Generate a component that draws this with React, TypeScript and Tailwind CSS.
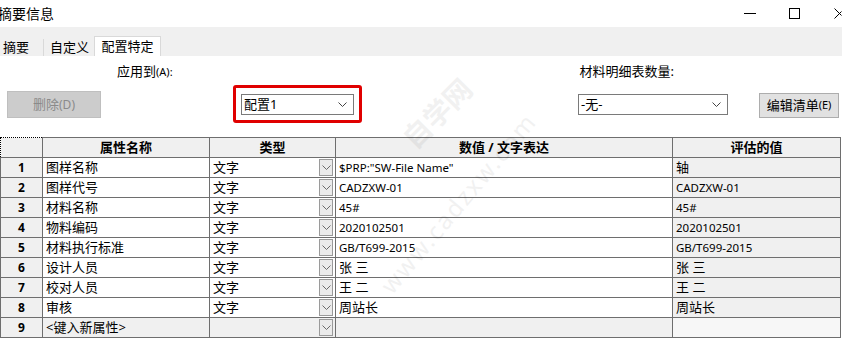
import React from 'react';

const FONT = "font-['Noto_Sans','Noto_Sans_CJK_SC',sans-serif]";

const rows = [
    { name: '图样名称', type: '文字', value: '$PRP:"SW-File Name"', evaluated: '轴' },
    { name: '图样代号', type: '文字', value: 'CADZXW-01', evaluated: 'CADZXW-01' },
    { name: '材料名称', type: '文字', value: '45#', evaluated: '45#' },
    { name: '物料编码', type: '文字', value: '2020102501', evaluated: '2020102501' },
    { name: '材料执行标准', type: '文字', value: 'GB/T699-2015', evaluated: 'GB/T699-2015' },
    { name: '设计人员', type: '文字', value: '张 三', evaluated: '张 三' },
    { name: '校对人员', type: '文字', value: '王 二', evaluated: '王 二' },
    { name: '审核', type: '文字', value: '周站长', evaluated: '周站长' },
];

// 中文用 13px，拉丁字符稍小
const isCjk = (s: string) => /^[\u4e00-\u9fa5]/.test(s);

function Chevron({ className = '' }: { className?: string }) {
    return (
        <svg width="9" height="5" viewBox="0 0 9 5" className={className}>
            <path d="M0.5 0.5 L4.5 4.5 L8.5 0.5" fill="none" stroke="currentColor" strokeWidth="1" />
        </svg>
    );
}

function Combo({ text, width }: { text: string; width: string }) {
    return (
        <div className={`${width} h-[21px] border border-[#7a7a7a] bg-white flex items-center justify-between pl-[2px] pr-[6px]`}>
            <span className="text-[13px] leading-none text-black">{text}</span>
            <Chevron className="text-[#444]" />
        </div>
    );
}

function CellDrop() {
    return (
        <div className="w-[14px] h-[17px] border border-[#9a9a9a] bg-[#ebebeb] flex items-center justify-center text-[#6a6a6a]">
            <Chevron />
        </div>
    );
}

export default function App() {
    return (
        <div className={`relative w-[842px] h-[338px] overflow-hidden bg-white text-black ${FONT}`}>
            {/* 标题栏 */}
            <div className="h-[27px] flex items-center justify-between">
                <span className="-ml-[2px] text-[14px] leading-none">摘要信息</span>
                <div className="flex items-center h-full">
                    <div className="w-[12px] h-px bg-black mr-[33px]" />
                    <div className="w-[11px] h-[11px] border border-black mr-[34px]" />
                    <svg width="8" height="11" viewBox="0 0 8 11">
                        <path d="M0.5 0.5 L7.5 7.5 M0.5 10.5 L7.5 3.5" stroke="black" strokeWidth="1" fill="none" />
                    </svg>
                </div>
            </div>

            {/* 选项卡 */}
            <div className="h-[29px] bg-[#f0f0f0] flex items-end">
                <div className="h-[17px] w-[44px] pl-[3px] flex items-center text-[13px] border-r border-[#d9d9d9]">摘要</div>
                <div className="h-[17px] w-[50px] pl-[6px] flex items-center text-[13px]">自定义</div>
                <div className="h-[20px] w-[67px] bg-white border border-b-0 border-[#d9d9d9] flex items-center justify-center text-[13px]">配置特定</div>
            </div>

            {/* 配置控制 */}
            <div className="h-[81px]">
                <div className="h-[32px] flex items-center text-[13px]">
                    <span className="ml-[117px]">应用到<span className="text-[11px]">(A):</span></span>
                    <span className="ml-[407px]">材料明细表数量:</span>
                </div>
                <div className="flex items-start">
                    <div className="ml-[7px] mt-[3px] w-[94px] h-[27px] bg-[#cccccc] border border-[#bfbfbf] flex items-center justify-center text-[13px] text-[#8a8a8a]">
                        删除<span className="text-[12px]">(D)</span>
                    </div>
                    <div className="ml-[132px] -mt-[3px] w-[129px] h-[38px] border-[3px] border-[#e00000] rounded-[3px] flex items-center justify-center">
                        <Combo text="配置1" width="w-[113px]" />
                    </div>
                    <div className="ml-[216px] mt-[6px]">
                        <Combo text="-无-" width="w-[150px]" />
                    </div>
                    <div className="ml-[31px] mt-[5px] w-[80px] h-[25px] bg-[#e1e1e1] border border-[#adadad] flex items-center justify-center text-[13px]">
                        编辑清单<span className="text-[11px]">(E)</span>
                    </div>
                </div>
            </div>

            {/* 属性表格 */}
            <table className="border-collapse table-fixed w-[840px] text-[13px] leading-none">
                <colgroup>
                    <col className="w-[42px]" />
                    <col className="w-[167px]" />
                    <col className="w-[126px]" />
                    <col className="w-[337px]" />
                    <col className="w-[168px]" />
                </colgroup>
                <thead>
                    <tr className="h-[20px] bg-[#f0f0f0] font-bold">
                        <th className="border border-dotted border-black p-0" />
                        <th className="border border-[#6e6e6e] p-0">属性名称</th>
                        <th className="border border-[#6e6e6e] p-0">类型</th>
                        <th className="border border-[#6e6e6e] p-0">数值 / 文字表达</th>
                        <th className="border border-[#6e6e6e] p-0">评估的值</th>
                    </tr>
                </thead>
                <tbody>
                    {rows.map((row, i) => (
                        <tr key={row.name} className="h-[20px]">
                            <td className="border border-[#6e6e6e] bg-[#f0f0f0] text-center font-bold text-[12px] p-0">{i + 1}</td>
                            <td className="border border-[#6e6e6e] bg-white pl-[3px] p-0">{row.name}</td>
                            <td className="border border-[#6e6e6e] bg-white p-0">
                                <div className="flex items-center justify-between pl-[3px] pr-[2px]">
                                    <span>{row.type}</span>
                                    <CellDrop />
                                </div>
                            </td>
                            <td className={`border border-[#6e6e6e] bg-white pl-[3px] p-0 ${isCjk(row.value) ? '' : 'text-[11.5px]'}`}>{row.value}</td>
                            <td className={`border border-[#6e6e6e] bg-[#f0f0f0] pl-[3px] p-0 ${isCjk(row.evaluated) ? '' : 'text-[11.5px]'}`}>{row.evaluated}</td>
                        </tr>
                    ))}
                    <tr className="h-[20px]">
                        <td className="border border-[#6e6e6e] bg-[#f0f0f0] text-center font-bold text-[12px] p-0">9</td>
                        <td className="border border-[#6e6e6e] bg-[#f0f0f0] pl-[3px] p-0">&lt;键入新属性&gt;</td>
                        <td className="border border-[#6e6e6e] bg-[#f0f0f0] p-0">
                            <div className="flex items-center justify-end pr-[2px]">
                                <CellDrop />
                            </div>
                        </td>
                        <td className="border border-[#6e6e6e] bg-[#f0f0f0] p-0" />
                        <td className="border border-[#6e6e6e] bg-[#f7f7f7] p-0" />
                    </tr>
                </tbody>
            </table>

            {/* 水印 */}
            <div className="pointer-events-none absolute left-[395px] top-[92px] -rotate-45 text-[28px] text-black opacity-[0.05] font-bold whitespace-nowrap">自学网</div>
            <div className="pointer-events-none absolute left-[345px] top-[185px] -rotate-[50deg] text-[24px] tracking-[2px] text-black opacity-[0.05] whitespace-nowrap">www.cadzxw.com</div>
        </div>
    );
}
